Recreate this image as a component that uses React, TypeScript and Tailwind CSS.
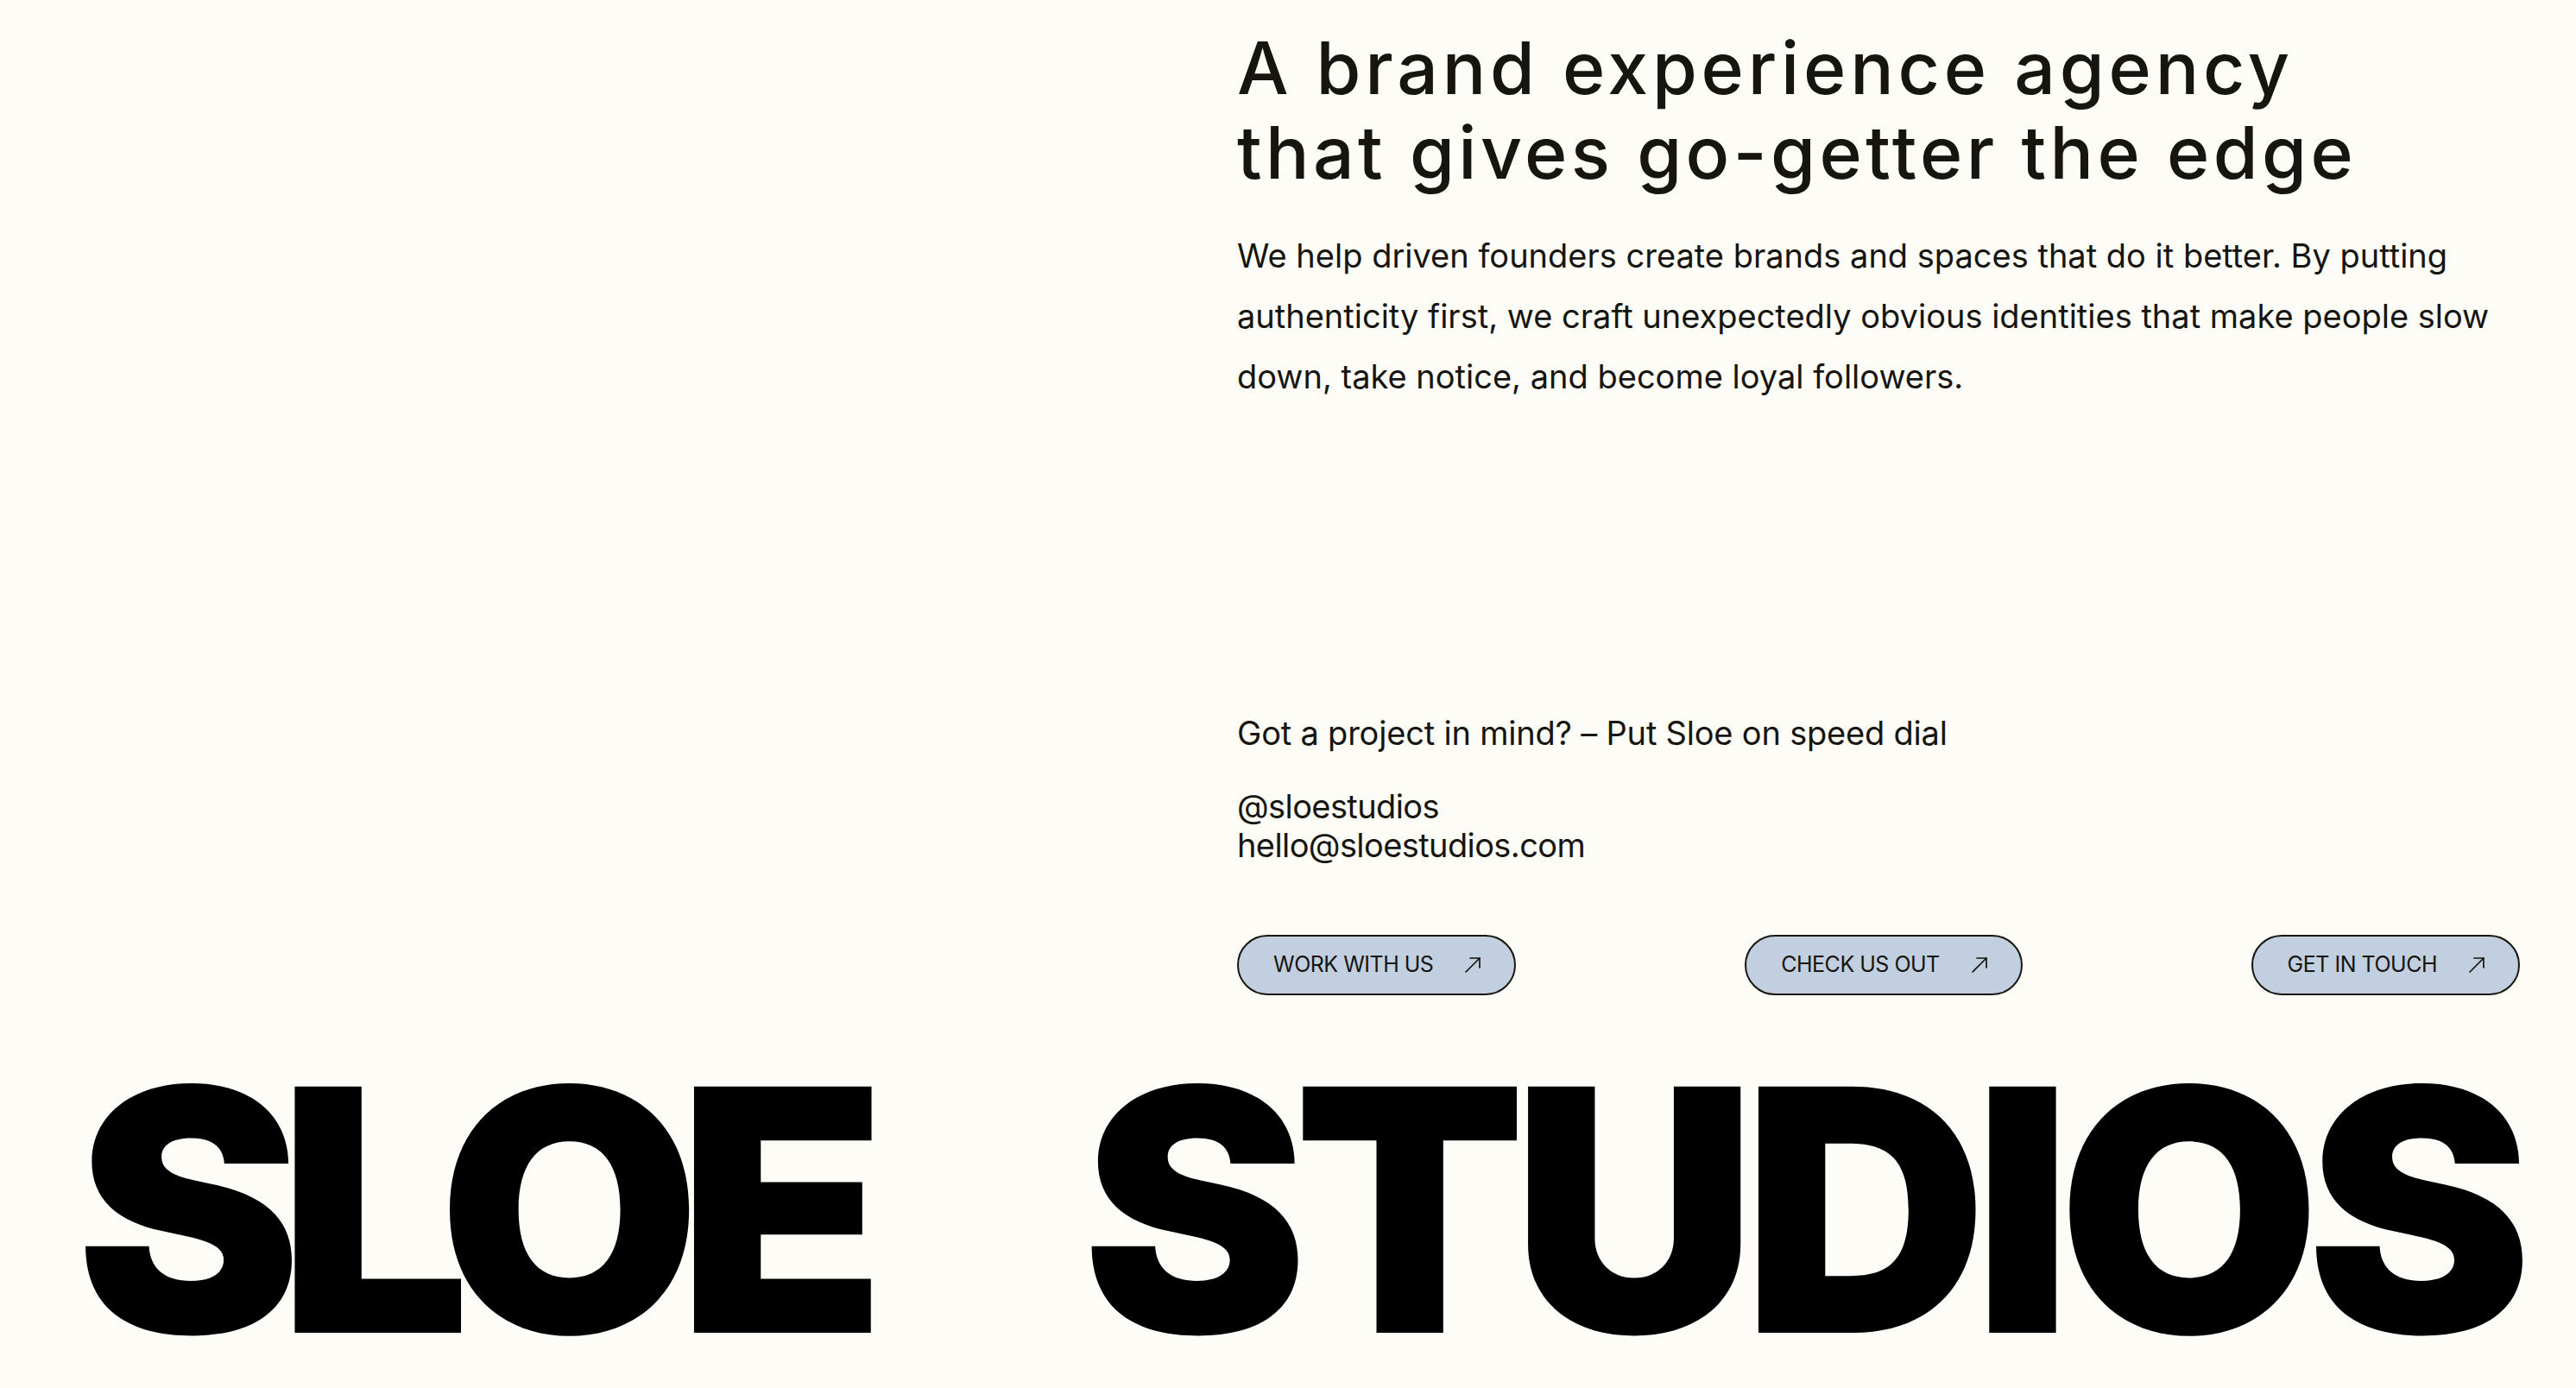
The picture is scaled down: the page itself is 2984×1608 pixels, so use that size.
import React from "react";

function Arrow() {
  return (
    <svg width="20" height="20" viewBox="0 0 20 20" fill="none" stroke="#16150f" strokeWidth="1.7" strokeLinecap="round" strokeLinejoin="round">
      <path d="M2 18 18 2" />
      <path d="M7 2h11v11" />
    </svg>
  );
}

function Pill({ label }: { label: string }) {
  return (
    <a className="flex h-[70px] items-center gap-[36px] rounded-full border-2 border-[#16150f] bg-[#c2cfe0] pl-[40px] pr-[38px] text-[25px] uppercase tracking-[-0.5px] text-[#16150f]">
      <span>{label}</span>
      <Arrow />
    </a>
  );
}

export default function App() {
  return (
    <div className="flex h-[1608px] w-full flex-col bg-[#fdfcf7] text-[#16150f]" style={{ fontFamily: "Inter, 'Noto Sans', sans-serif" }}>
      <div className="grid grid-cols-[1433px_1fr] pr-[65px]">
        <div />
        <div className="flex flex-col pt-[30px]">
          <h1 className="text-[84px] font-medium leading-[98px] tracking-[4.8px]">
            A brand experience agency
            <br />
            <span className="tracking-[4.4px]">that gives go-getter the edge</span>
          </h1>
          <p className="mt-[35px] text-[38px] leading-[70px] tracking-[0px]">
            We help driven founders create brands and spaces that do it better. By putting authenticity first, we craft unexpectedly obvious identities that make people slow down, take notice, and become loyal followers.
          </p>
          <p className="mt-[355px] text-[38px] leading-[46px] tracking-[-0.2px]">
            Got a project in mind? – Put Sloe on speed dial
          </p>
          <div className="mt-[40px] flex flex-col text-[38px] leading-[45px] tracking-[-0.6px]">
            <span>@sloestudios</span>
            <span>hello@sloestudios.com</span>
          </div>
          <div className="mt-[81px] flex items-center justify-between">
            <Pill label="Work with us" />
            <Pill label="Check us out" />
            <Pill label="Get in touch" />
          </div>
        </div>
      </div>
      <div className="mt-[92px] flex justify-between pl-[88px] pr-[51px] text-[392px] font-black leading-[0.8] text-black">
        <span className="pr-[26px] tracking-[-26px]">SLOE</span>
        <span className="pr-[16px] tracking-[-16px]">STUDIOS</span>
      </div>
    </div>
  );
}
